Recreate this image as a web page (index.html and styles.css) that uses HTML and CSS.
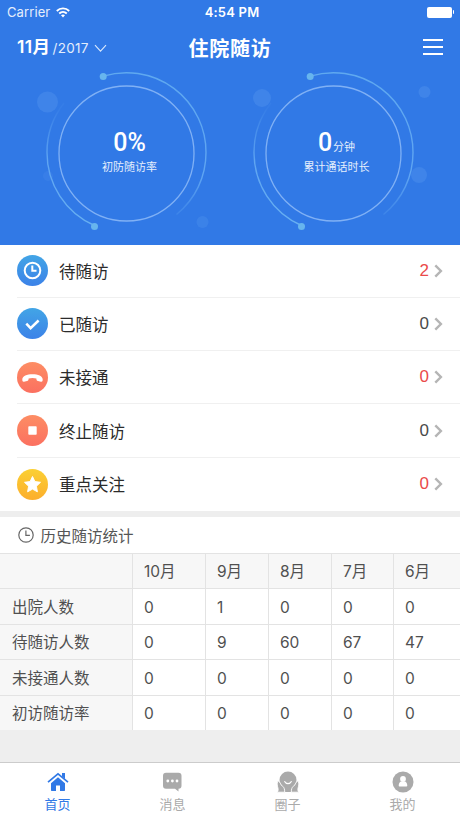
FILE: index.html
```html
<!DOCTYPE html>
<html lang="zh-CN">
<head>
  <meta charset="UTF-8">
  <meta name="viewport" content="width=device-width, initial-scale=1.0">
  <title>住院随访</title>
  <link rel="stylesheet" href="styles.css">
</head>
<body>
  <svg width="0" height="0" class="defs">
    <defs>
      <linearGradient id="fade-right" gradientUnits="userSpaceOnUse" x1="110" y1="6" x2="155" y2="155">
        <stop offset="0" stop-color="#5fa9f0"/>
        <stop offset="0.75" stop-color="#5fa5f2"/>
        <stop offset="1" stop-color="#5fa5f2" stop-opacity="0"/>
      </linearGradient>
      <linearGradient id="fade-left" gradientUnits="userSpaceOnUse" x1="60" y1="157" x2="42" y2="38">
        <stop offset="0" stop-color="#67b0f2"/>
        <stop offset="0.6" stop-color="#5fa5f2"/>
        <stop offset="1" stop-color="#5fa5f2" stop-opacity="0.1"/>
      </linearGradient>
      <g id="ring" fill="none">
        <path d="M80.200 6.200A79.500 79.500 0 0 1 183 82.500A79.500 79.500 0 0 1 153.500 144.500" stroke="url(#fade-right)" stroke-width="1.4"/>
        <path d="M71.500 155.500A79.500 79.500 0 0 1 24 82.500A79.500 79.500 0 0 1 41 33" stroke="url(#fade-left)" stroke-width="1.4"/>
        <circle cx="103.5" cy="83.5" r="67.5" stroke="#80b1f5" stroke-width="1.3"/>
        <circle cx="80.2" cy="6.5" r="3.5" fill="#67b5ee"/>
        <circle cx="71.5" cy="156.5" r="3.5" fill="#67b5ee"/>
      </g>
    </defs>
  </svg>

  <div class="header">
    <div class="status">
      <div class="carrier">Carrier
        <svg width="14" height="11" viewBox="0 0 14 11" fill="none" stroke="#fff" stroke-width="1.8">
          <path d="M.8 4C4.300.4 9.700.4 13.200 4"/>
          <path d="M3.200 6.500c2.200-2.100 5.400-2.100 7.600 0"/>
          <path d="M5 8.300c1.200-1 2.800-1 4 0l-2 2.200z" fill="#fff" stroke="none"/>
        </svg>
      </div>
      <div class="time">4:54 PM</div>
      <div class="battery"><span></span><i></i></div>
    </div>

    <div class="nav">
      <div class="month"><b>11月</b>/2017
        <svg width="13" height="9" viewBox="0 0 13 9" fill="none" stroke="#d9e8fc" stroke-width="1.1"><path d="M1 1.200l5.500 6 5.500-6"/></svg>
      </div>
      <h1>住院随访</h1>
      <div class="menu"><span></span><span></span><span></span></div>
    </div>

    <div class="rings">
      <div class="ring">
        <svg width="207" height="175" viewBox="0 0 207 175">
          <g fill="#3f84e9">
            <circle cx="24.500" cy="32" r="10.500"/>
            <circle cx="25" cy="106" r="5" opacity=".5"/>
            <circle cx="179.500" cy="152" r="6" opacity=".8"/>
          </g>
          <use href="#ring"/>
        </svg>
        <div class="value">0%</div>
        <div class="caption">初防随访率</div>
      </div>
      <div class="ring">
        <svg width="207" height="175" viewBox="0 0 207 175">
          <g fill="#3f84e9">
            <circle cx="32" cy="28" r="9"/>
            <circle cx="194.500" cy="22" r="6"/>
            <circle cx="189" cy="105" r="8"/>
          </g>
          <use href="#ring"/>
        </svg>
        <div class="value">0<small>分钟</small></div>
        <div class="caption">累计通话时长</div>
      </div>
    </div>
  </div>

  <div class="list">
    <div class="item">
      <span class="icon blue">
        <svg width="31" height="31" viewBox="0 0 31 31" fill="none" stroke="#fff" stroke-width="2"><circle cx="15.500" cy="15.500" r="7.800"/><path d="M15.300 10.500v5.300h4.200"/></svg>
      </span>
      <div class="row"><span class="name">待随访</span><span class="count red">2</span><svg class="arrow" width="9" height="14" viewBox="0 0 9 14"><path d="M1.300 1.400L6.900 7l-5.600 5.600"/></svg></div>
    </div>
    <div class="item">
      <span class="icon blue">
        <svg width="31" height="31" viewBox="0 0 31 31" fill="none" stroke="#fff" stroke-width="2.500"><path d="M9.300 15.700l4.300 4.500 8-7.700"/></svg>
      </span>
      <div class="row"><span class="name">已随访</span><span class="count">0</span><svg class="arrow" width="9" height="14" viewBox="0 0 9 14"><path d="M1.300 1.400L6.900 7l-5.600 5.600"/></svg></div>
    </div>
    <div class="item">
      <span class="icon orange">
        <svg width="31" height="31" viewBox="0 0 31 31" fill="#fff"><path d="M5.300 17.500c0-3.600 4.700-5.300 10.200-5.300s10.200 1.700 10.200 5.300c0 1.700-.5 2.400-1.700 2.200l-3-.6c-1.300-.3-1.600-1-1.600-2.600-2.400-.8-5.400-.8-7.800 0 0 1.600-.3 2.300-1.600 2.600l-3 .6c-1.200.2-1.700-.5-1.700-2.200z"/></svg>
      </span>
      <div class="row"><span class="name">未接通</span><span class="count red">0</span><svg class="arrow" width="9" height="14" viewBox="0 0 9 14"><path d="M1.300 1.400L6.900 7l-5.600 5.600"/></svg></div>
    </div>
    <div class="item">
      <span class="icon orange">
        <svg width="31" height="31" viewBox="0 0 31 31" fill="#fff"><rect x="11.300" y="11.300" width="8.400" height="8.400" rx=".8"/></svg>
      </span>
      <div class="row"><span class="name">终止随访</span><span class="count">0</span><svg class="arrow" width="9" height="14" viewBox="0 0 9 14"><path d="M1.300 1.400L6.900 7l-5.600 5.600"/></svg></div>
    </div>
    <div class="item">
      <span class="icon yellow">
        <svg width="31" height="31" viewBox="0 0 31 31" fill="#fff" stroke="#fff" stroke-linejoin="round"><path d="M15.500 7.500l2.400 5.100 5.600.7-4.100 3.900 1 5.600-4.900-2.700-4.900 2.700 1-5.600-4.100-3.900 5.600-.7z"/></svg>
      </span>
      <div class="row"><span class="name">重点关注</span><span class="count red">0</span><svg class="arrow" width="9" height="14" viewBox="0 0 9 14"><path d="M1.300 1.400L6.900 7l-5.600 5.600"/></svg></div>
    </div>
  </div>

  <div class="history">
    <div class="history-title">
      <svg width="16" height="16" viewBox="0 0 16 16" fill="none" stroke="#666" stroke-width="1.200"><circle cx="8" cy="8" r="7.200"/><path d="M7.900 3.500v4.800h4"/></svg>
      历史随访统计
    </div>
    <table>
      <colgroup><col class="c0"><col class="c1"><col class="c2"><col class="c3"><col class="c4"><col class="c5"></colgroup>
      <tr><th></th><th>10月</th><th>9月</th><th>8月</th><th>7月</th><th>6月</th></tr>
      <tr><th>出院人数</th><td>0</td><td>1</td><td>0</td><td>0</td><td>0</td></tr>
      <tr><th>待随访人数</th><td>0</td><td>9</td><td>60</td><td>67</td><td>47</td></tr>
      <tr><th>未接通人数</th><td>0</td><td>0</td><td>0</td><td>0</td><td>0</td></tr>
      <tr><th>初访随访率</th><td>0</td><td>0</td><td>0</td><td>0</td><td>0</td></tr>
    </table>
  </div>

  <div class="tabs">
    <div class="tab active">
      <svg width="22" height="20" viewBox="0 0 22 20" fill="currentColor">
        <path d="M4 11.200l7-6 7 6V18c0 .6-.3 1-1 1h-4v-5.500H9V19H5c-.7 0-1-.4-1-1z"/>
        <path d="M1 10.200L11 1.800l10 8.400" fill="none" stroke="currentColor" stroke-width="1.700"/>
        <path d="M15 1h3v6l-3-2.500z"/>
      </svg>
      首页
    </div>
    <div class="tab">
      <svg width="22" height="20" viewBox="0 0 22 20" fill="currentColor">
        <path d="M4 .8h12.500a3 3 0 0 1 3 3v10a3 3 0 0 1-3 3h0V19.500l-3.500-2.700H4a3 3 0 0 1-3-3v-10a3 3 0 0 1 3-3z"/>
        <g fill="#fff"><circle cx="5.800" cy="9" r="1.400"/><circle cx="10.400" cy="9" r="1.400"/><circle cx="15" cy="9" r="1.400"/></g>
      </svg>
      消息
    </div>
    <div class="tab">
      <svg width="22" height="22" viewBox="0 0 22 22" fill="currentColor">
        <path d="M4.500 15.500L11 13l6.500 2.500-1.800 5.500H6.300z"/>
        <circle cx="11" cy="9" r="8.500"/>
        <path d="M7.400 10.300c1.800 3.200 5.400 3.200 7.200 0" fill="none" stroke="#fff" stroke-width="1.200"/>
        <path d="M1.300 10.200c1.800 0 2 3.600 4.400 5.200 1.400 1 2 2.800 2 5.800H.3c1.200-2 1-3 .3-5.400-.7-2.400-.5-5.600.7-5.600zM20.700 10.200c-1.800 0-2 3.600-4.400 5.200-1.400 1-2 2.800-2 5.800h7.400c-1.200-2-1-3-.3-5.400.7-2.400.5-5.600-.7-5.600z" stroke="#fff" stroke-width=".9"/>
      </svg>
      圈子
    </div>
    <div class="tab">
      <svg width="22" height="22" viewBox="0 0 22 22" fill="currentColor">
        <circle cx="11" cy="11" r="10.500"/>
        <g fill="#fff"><circle cx="11" cy="8" r="2.900"/><path d="M6.700 14.800c0-3 1.300-4 2.500-4.300h3.600c1.200.3 2.500 1.300 2.500 4.300 0 .5-.3.700-.8.700h-7c-.5 0-.8-.2-.8-.7z"/></g>
      </svg>
      我的
    </div>
  </div>
</body>
</html>
```

FILE: styles.css
```css
* {
  margin: 0;
  padding: 0;
  box-sizing: border-box;
}

body {
  width: 460px;
  height: 818px;
  display: flex;
  flex-direction: column;
  overflow: hidden;
  background-color: #eee;
  font-family: Inter, "Noto Sans CJK SC", sans-serif;
  color: #333;
}

svg {
  display: block;
  flex: none;
}

.defs {
  position: absolute;
}

/* header */
.header {
  height: 244.5px;
  flex: none;
  background-color: #3179e6;
  color: #fff;
}

.status {
  height: 24px;
  padding: 0 6px 0 7px;
  display: grid;
  grid-template-columns: 1fr auto 1fr;
  align-items: center;
}

.carrier {
  display: flex;
  align-items: center;
  gap: 6px;
  font-size: 13px;
  letter-spacing: 0.1px;
  color: #e4eefc;
}

.time {
  padding-left: 3px;
  font-size: 13px;
  font-weight: 600;
  letter-spacing: 0.2px;
}

.battery {
  display: flex;
  justify-content: flex-end;
  align-items: center;
  gap: 1px;
}

.battery span {
  width: 25px;
  height: 11px;
  border-radius: 2px;
  background-color: #fff;
}

.battery i {
  width: 1.5px;
  height: 4px;
  border-radius: 0 2px 2px 0;
  background-color: #fff;
}

.nav {
  height: 46px;
  padding: 0 17px;
  display: grid;
  grid-template-columns: 1fr auto 1fr;
  align-items: center;
}

.month {
  display: flex;
  align-items: baseline;
  margin-top: -3px;
  font-size: 13.5px;
  letter-spacing: 0.3px;
  color: #e4eefc;
}

.month b {
  margin-right: 2px;
  font-size: 17.5px;
  font-weight: 600;
  letter-spacing: 0.4px;
  color: #fff;
}

.month svg {
  margin-left: 5px;
}

.nav h1 {
  font-size: 20px;
  font-weight: bold;
  letter-spacing: 0.8px;
}

.menu {
  display: flex;
  flex-direction: column;
  align-items: flex-end;
  gap: 5px;
}

.menu span {
  width: 20px;
  height: 2px;
  background-color: #fff;
}

.rings {
  padding: 0 23px;
  display: flex;
}

.ring {
  width: 207px;
  display: grid;
  grid-template-rows: 57px 30px 20px 68px;
  justify-items: center;
  align-items: center;
}

.ring svg {
  grid-area: 1 / 1 / 5 / 2;
}

.value {
  grid-area: 2 / 1;
  padding: 1px 0 0 6px;
  display: flex;
  align-items: baseline;
  font-family: Roboto, "Noto Sans CJK SC", sans-serif;
  font-size: 25px;
  font-weight: 500;
  line-height: 30px;
}

.value small {
  margin-left: 1px;
  font-size: 11px;
  font-weight: normal;
  line-height: 16px;
  color: #e4eefc;
}

.caption {
  grid-area: 3 / 1;
  padding-left: 6px;
  font-size: 11px;
  line-height: 20px;
  color: #e4eefc;
}

/* list */
.list {
  flex: none;
  background-color: #fff;
}

.item {
  height: 53.3px;
  margin-left: 17px;
  display: flex;
  align-items: center;
  border-bottom: 1px solid #f0f0f0;
}

.item:last-child {
  border-bottom: none;
}

.icon {
  width: 31px;
  height: 31px;
  border-radius: 50%;
}

.blue {
  background-image: linear-gradient(#42a5e6, #3c82e8);
}

.orange {
  background-image: linear-gradient(#fd8d64, #fb7060);
}

.yellow {
  background-image: linear-gradient(#fbd034, #fcae2c);
}

.row {
  flex: 1;
  display: flex;
  align-items: center;
  padding: 0 17px 0 11px;
  font-size: 16.5px;
}

.name {
  flex: 1;
  color: #2b2b2b;
}

.count {
  font-family: "Liberation Sans", sans-serif;
  font-size: 17px;
  color: #4a4a4a;
}

.red {
  color: #ea4a4a;
}

.arrow {
  margin-left: 5px;
  fill: none;
  stroke: #b5b5b5;
  stroke-width: 2.4;
}

/* history table */
.history {
  margin-top: 6px;
  flex: none;
  background-color: #fff;
}

.history-title {
  height: 36px;
  padding-left: 18px;
  display: flex;
  align-items: center;
  gap: 6.5px;
  font-size: 15.5px;
  color: #555;
}

table {
  width: 460px;
  table-layout: fixed;
  border-collapse: separate;
  border-spacing: 0;
  font-size: 15.5px;
  color: #505050;
}

.c0 { width: 132px; }
.c1 { width: 73px; }
.c2 { width: 63px; }
.c3 { width: 63px; }
.c4 { width: 62px; }
.c5 { width: 67px; }

th, td {
  height: 35.5px;
  padding: 2px 0 0 11px;
  border-top: 1px solid #e3e3e3;
  border-left: 1px solid #e3e3e3;
  font-weight: normal;
  text-align: left;
  line-height: 20px;
}

th {
  background-color: #f7f7f7;
}

th:first-child {
  border-left: none;
  padding-left: 12px;
}

/* bottom tabs */
.tabs {
  height: 56px;
  margin-top: auto;
  flex: none;
  display: flex;
  border-top: 1px solid #ccc;
  background-color: #fff;
}

.tab {
  flex: 1;
  display: flex;
  flex-direction: column;
  align-items: center;
  padding-top: 8px;
  font-size: 13px;
  line-height: 20px;
  color: #aaa;
}

.tab svg {
  height: 22px;
  margin-bottom: 1px;
}

.active {
  color: #3179e6;
}
```
